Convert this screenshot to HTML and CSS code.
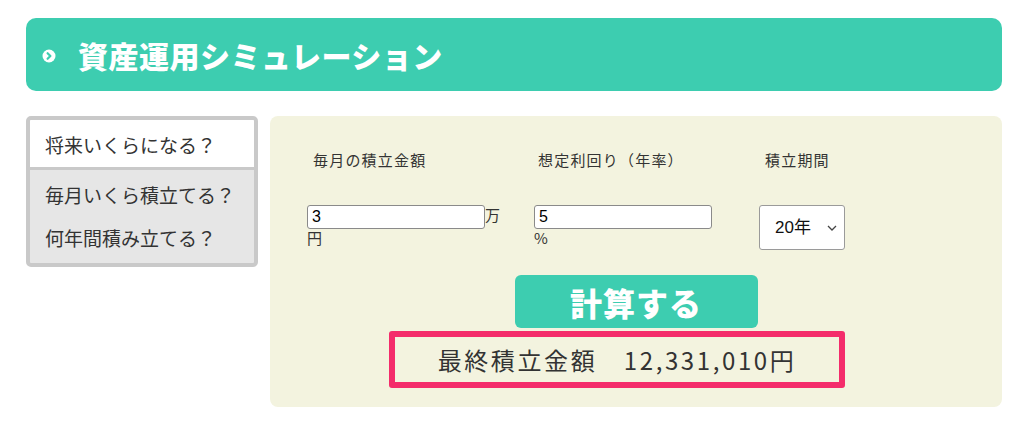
FILE: index.html
```html
<!DOCTYPE html>
<html lang="ja">
<head>
<meta charset="utf-8">
<title>資産運用シミュレーション</title>
<link rel="stylesheet" href="styles.css">
</head>
<body>
<div class="page">
  <h2 class="header">
    <svg class="header-icon" width="14" height="14" viewBox="0 0 14 14" aria-hidden="true">
      <circle cx="7" cy="7" r="6.5" fill="#fff"/>
      <path d="M5.6 4.2 L8.4 7 L5.6 9.8" fill="none" stroke="#3dcdb0" stroke-width="2.2" stroke-linecap="round" stroke-linejoin="round"/>
    </svg>
    <span>資産運用シミュレーション</span>
  </h2>
  <div class="content">
    <div class="tabs">
      <div class="tab tab-active">将来いくらになる？</div>
      <div class="tab-rest">
        <div class="tab">毎月いくら積立てる？</div>
        <div class="tab">何年間積み立てる？</div>
      </div>
    </div>
    <div class="panel">
      <div class="fields">
        <div class="label">毎月の積立金額</div>
        <div class="label">想定利回り（年率）</div>
        <div class="label">積立期間</div>
        <div class="field field-1"><input class="num" type="text" value="3">万円</div>
        <div class="field field-2"><input class="num" type="text" value="5">%</div>
        <div class="field">
          <div class="select"><span>20年</span>
            <svg width="10" height="6" viewBox="0 0 10 6" aria-hidden="true"><path d="M1 1 L5 5 L9 1" fill="none" stroke="#444" stroke-width="1.3"/></svg>
          </div>
        </div>
      </div>
      <div class="btn">計算する</div>
      <div class="result">最終積立金額　12,331,010円</div>
    </div>
  </div>
</div>
</body>
</html>
```

FILE: styles.css
```css
* { box-sizing: border-box; }
html, body { margin: 0; padding: 0; background: #fff; }
body { font-family: "Noto Sans CJK JP", "Noto Sans", sans-serif; color: #333; }

.page { padding: 18px 22px 0 26px; width: 1024px; }

.header {
  margin: 0;
  height: 73px;
  width: 976px;
  background: #3dcdb0;
  border-radius: 10px;
  display: flex;
  align-items: center;
  padding-left: 16px;
  gap: 22px;
  color: #fff;
  font-size: 30px;
  font-weight: 900;
  letter-spacing: 0.5px;
}
.header-icon { flex: none; margin-top: 2px; }

.content { display: flex; gap: 12px; margin-top: 25px; align-items: flex-start; }

.tabs {
  width: 232px;
  height: 151px;
  border: 4px solid #c9c9c9;
  border-radius: 5px;
  background: #e6e6e6;
  overflow: hidden;
  font-size: 19px;
  color: #333;
}
.tab { height: 43px; display: flex; align-items: center; padding-left: 15px; }
.tab-active { background: #fff; border-bottom: 3px solid #c9c9c9; height: 50px; padding-top: 1px; }
.tab-rest { padding-top: 3px; }

.panel {
  width: 732px;
  height: 291px;
  background: #f3f3df;
  border-radius: 8px;
  padding: 33px 0 0 37px;
  display: flex;
  flex-direction: column;
}

.fields {
  display: grid;
  grid-template-columns: 227px 225px auto;
  row-gap: 34px;
}
.label { font-size: 15px; letter-spacing: 1.2px; line-height: 22px; padding-left: 6px; }
.label:nth-child(2) { padding-left: 4px; }
.field { font-size: 15px; line-height: 18px; color: #333; }
.field-1 { width: 198px; }
.field-2 { width: 185px; }
.num {
  width: 178px;
  height: 24px;
  border: 1px solid #8a8a8a;
  border-radius: 3px;
  padding: 0 4px;
  background: #fff;
  font-family: "Liberation Sans", sans-serif;
  font-size: 16px;
  color: #000;
  vertical-align: -1px;
  margin: 0;
}

.select {
  width: 86px;
  height: 45px;
  background: #fff;
  border: 1px solid #9a9a9a;
  border-radius: 3px;
  display: flex;
  align-items: center;
  justify-content: space-between;
  padding: 0 7px 0 15px;
  font-family: "Liberation Sans", "Noto Sans CJK JP", sans-serif;
  font-size: 17px;
  color: #111;
}

.btn {
  align-self: center;
  margin: 25px 0 0 -37px;
  width: 243px;
  height: 53px;
  background: #3dcdb0;
  border-radius: 6px;
  color: #fff;
  font-size: 32px;
  font-weight: 900;
  letter-spacing: 1px;
  display: flex;
  align-items: center;
  justify-content: center;
}

.result {
  margin: 3px 0 0 82px;
  width: 456px;
  height: 57px;
  border: 6px solid #f42c6b;
  border-radius: 3px;
  display: flex;
  align-items: center;
  justify-content: center;
  font-size: 24px;
  letter-spacing: 2.6px;
  color: #333;
}
```
